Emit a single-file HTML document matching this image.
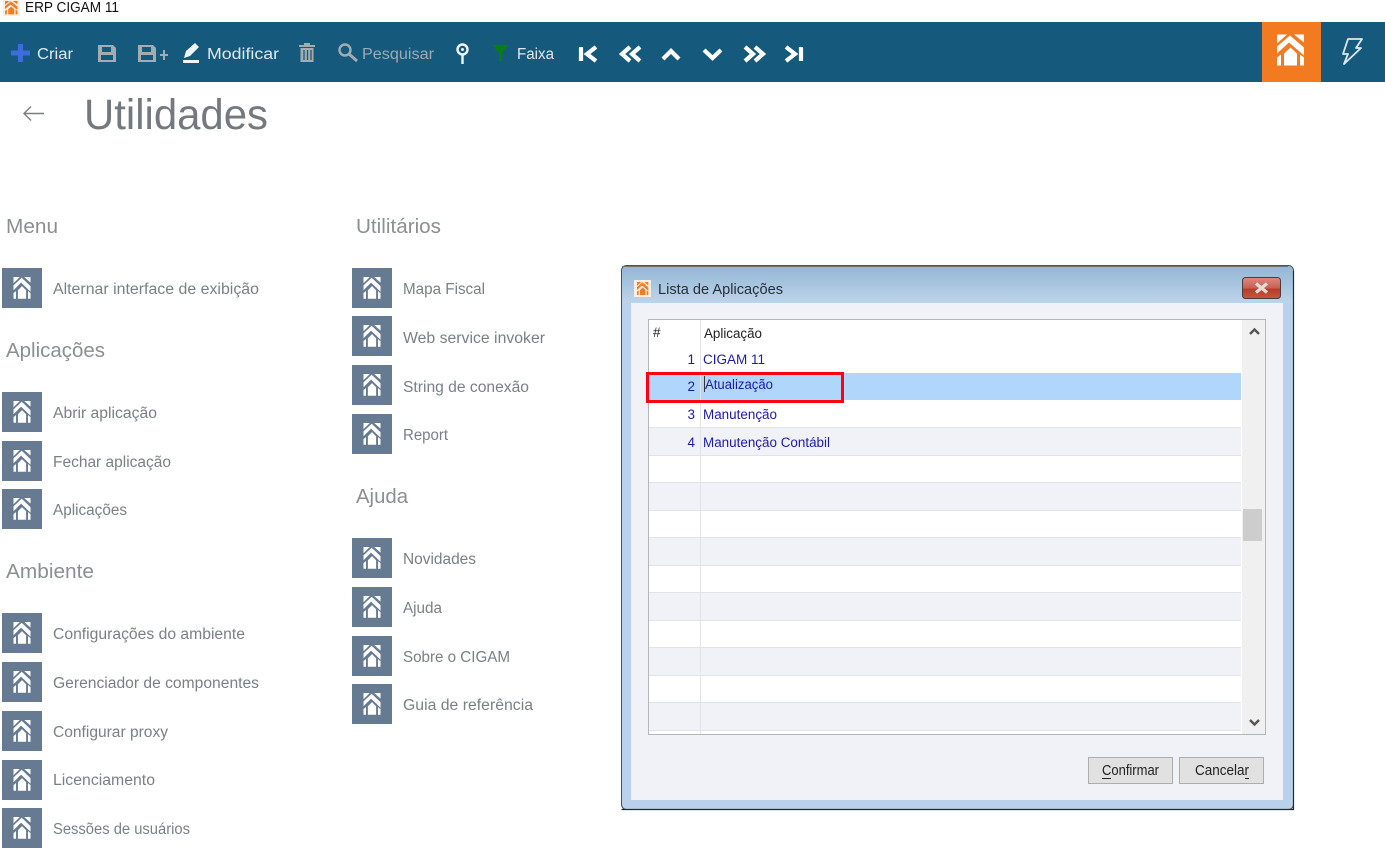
<!DOCTYPE html>
<html lang="pt-BR">
<head>
<meta charset="utf-8">
<title>ERP CIGAM 11</title>
<style>
html,body{margin:0;padding:0;background:#fff;width:1385px;height:868px;overflow:hidden}
svg{display:block}
text{font-family:"Liberation Sans",sans-serif}
.tb{font-size:15.500px;fill:#dfe8ed}
.dis{font-size:15.500px;fill:#9aabb5}
.hd{font-size:20.500px;fill:#8b8f93}
.it{font-size:15.500px;fill:#7a8086}
.blue{font-size:13.500px;fill:#1c1caa}
.blk{font-size:13.500px;fill:#222}
.num{font-size:13.500px;fill:#1c1caa;text-anchor:end}
</style>
</head>
<body>
<svg width="1385" height="868" viewBox="0 0 1385 868" xmlns="http://www.w3.org/2000/svg">
<defs>
<g id="logo">
<path d="M0 0H10L0 9Z M17 0H27V8Z M0 12L13 1L27 13V21L12 8L0 19Z M13.500 13L20 19V31H7V19Z M0 23L4 20V31H0Z M27 23L23 20V31H27Z"/>
</g>
<g id="tile">
<rect width="40" height="40" fill="#667a92"/>
<use href="#logo" transform="translate(11.500 9) scale(.63 .7)" fill="#fff"/>
</g>
<linearGradient id="title" x1="0" y1="0" x2="0" y2="1"><stop offset="0" stop-color="#93b6d5"/><stop offset="1" stop-color="#bdd4ea"/></linearGradient>
<linearGradient id="close" x1="0" y1="0" x2="0" y2="1"><stop offset="0" stop-color="#dd8a80"/><stop offset=".5" stop-color="#c9604f"/><stop offset=".55" stop-color="#b63c28"/><stop offset="1" stop-color="#c9563f"/></linearGradient>
</defs>

<!-- window title -->
<rect x="3" y="0" width="17" height="16" fill="#fbeee3"/>
<use href="#logo" transform="translate(5 1) scale(.46 .43)" fill="#f47b20"/>
<text x="25" y="12" font-size="14.500" fill="#111" textLength="94" lengthAdjust="spacingAndGlyphs">ERP CIGAM 11</text>

<!-- toolbar -->
<rect x="0" y="22" width="1385" height="60" fill="#155a7d"/>
<path d="M20.500 44V62M11 53H30" stroke="#3f6cdc" stroke-width="5" fill="none"/>
<text class="tb" x="37" y="59" textLength="36" lengthAdjust="spacingAndGlyphs">Criar</text>

<g fill="#a2acb2">
<path fill-rule="evenodd" d="M98 45H113L116 48V62H98Z M102 47V52H111V47Z M101 55V60H113V55Z"/>
<path fill-rule="evenodd" d="M138 45H153L156 48V62H138Z M142 47V52H151V47Z M141 55V60H153V55Z"/>
<path d="M160 54H163V50H165V54H168V56H165V60H163V56H160Z"/>
<path d="M304 43H310V45H315V47H299V45H304Z M300.500 48H313.500V62H300.500Z"/>
</g>
<path d="M304 50V60M307.500 50V60M311 50V60" stroke="#155a7d" stroke-width="1.300"/>

<path d="M183 60H199V63H183Z" fill="#f2f5f7"/>
<path d="M184 58L186 51L195 43L199 47L190 56Z" fill="#f2f5f7"/>
<text class="tb" x="207" y="59" textLength="72" lengthAdjust="spacingAndGlyphs">Modificar</text>

<circle cx="345" cy="50" r="5.500" fill="none" stroke="#a2acb2" stroke-width="2.400"/>
<path d="M349 54L357 61" stroke="#a2acb2" stroke-width="3"/>
<text class="dis" x="362" y="59" textLength="72" lengthAdjust="spacingAndGlyphs">Pesquisar</text>

<circle cx="462.500" cy="49.500" r="5" fill="none" stroke="#f2f5f7" stroke-width="2.400"/>
<circle cx="462.500" cy="49.500" r="1.500" fill="#f2f5f7"/>
<path d="M462.500 55V64" stroke="#f2f5f7" stroke-width="2.400"/>
<path d="M492 45H509L502 53V61H499V53Z" fill="#0a7d0a"/>
<text class="tb" x="517" y="59" textLength="37" lengthAdjust="spacingAndGlyphs">Faixa</text>

<g fill="none" stroke="#fff" stroke-width="4.200">
<path d="M581 47V61M596 47L587 54L596 61"/>
<path d="M630 47L622 54L630 61M640 47L632 54L640 61"/>
<path d="M663 59L671 51L679 59"/>
<path d="M704 50L712.500 58L721 50"/>
<path d="M745 47L753 54L745 61M755 47L763 54L755 61"/>
<path d="M786 47L795 54L786 61M801 47V61"/>
</g>

<rect x="1262" y="22" width="59" height="60" fill="#f27a21"/>
<use href="#logo" transform="translate(1277 34.500)" fill="#fff"/>
<path d="M1348 39H1362L1356 48H1361L1344 64L1348 54H1343Z" fill="none" stroke="#dfe8ed" stroke-width="1.800" stroke-linejoin="round"/>

<!-- page heading -->
<path d="M44 113.500H24M31 106.500L24 113.500L31 120.500" fill="none" stroke="#7a7f83" stroke-width="1.400"/>
<text x="84" y="129" font-size="43" fill="#73797f" textLength="184" lengthAdjust="spacingAndGlyphs">Utilidades</text>

<!-- column 1 -->
<text class="hd" x="6" y="233" textLength="52" lengthAdjust="spacingAndGlyphs">Menu</text>
<use href="#tile" x="2" y="268"/>
<text class="it" x="53" y="294" textLength="206" lengthAdjust="spacingAndGlyphs">Alternar interface de exibição</text>

<text class="hd" x="6" y="357" textLength="99" lengthAdjust="spacingAndGlyphs">Aplicações</text>
<use href="#tile" x="2" y="392"/>
<text class="it" x="53" y="418" textLength="104" lengthAdjust="spacingAndGlyphs">Abrir aplicação</text>
<use href="#tile" x="2" y="441"/>
<text class="it" x="53" y="467" textLength="118" lengthAdjust="spacingAndGlyphs">Fechar aplicação</text>
<use href="#tile" x="2" y="489"/>
<text class="it" x="53" y="515" textLength="74" lengthAdjust="spacingAndGlyphs">Aplicações</text>

<text class="hd" x="6" y="578" textLength="88" lengthAdjust="spacingAndGlyphs">Ambiente</text>
<use href="#tile" x="2" y="613"/>
<text class="it" x="53" y="639" textLength="192" lengthAdjust="spacingAndGlyphs">Configurações do ambiente</text>
<use href="#tile" x="2" y="662"/>
<text class="it" x="53" y="688" textLength="206" lengthAdjust="spacingAndGlyphs">Gerenciador de componentes</text>
<use href="#tile" x="2" y="711"/>
<text class="it" x="53" y="737" textLength="115" lengthAdjust="spacingAndGlyphs">Configurar proxy</text>
<use href="#tile" x="2" y="760"/>
<text class="it" x="53" y="785" textLength="102" lengthAdjust="spacingAndGlyphs">Licenciamento</text>
<use href="#tile" x="2" y="808"/>
<text class="it" x="53" y="834" textLength="137" lengthAdjust="spacingAndGlyphs">Sessões de usuários</text>

<!-- column 2 -->
<text class="hd" x="356" y="233" textLength="85" lengthAdjust="spacingAndGlyphs">Utilitários</text>
<use href="#tile" x="352" y="268"/>
<text class="it" x="403" y="294" textLength="82" lengthAdjust="spacingAndGlyphs">Mapa Fiscal</text>
<use href="#tile" x="352" y="316"/>
<text class="it" x="403" y="343" textLength="142" lengthAdjust="spacingAndGlyphs">Web service invoker</text>
<use href="#tile" x="352" y="365"/>
<text class="it" x="403" y="392" textLength="126" lengthAdjust="spacingAndGlyphs">String de conexão</text>
<use href="#tile" x="352" y="414"/>
<text class="it" x="403" y="440" textLength="45" lengthAdjust="spacingAndGlyphs">Report</text>

<text class="hd" x="356" y="503" textLength="52" lengthAdjust="spacingAndGlyphs">Ajuda</text>
<use href="#tile" x="352" y="538"/>
<text class="it" x="403" y="564" textLength="73" lengthAdjust="spacingAndGlyphs">Novidades</text>
<use href="#tile" x="352" y="587"/>
<text class="it" x="403" y="613" textLength="39" lengthAdjust="spacingAndGlyphs">Ajuda</text>
<use href="#tile" x="352" y="636"/>
<text class="it" x="403" y="662" textLength="107" lengthAdjust="spacingAndGlyphs">Sobre o CIGAM</text>
<use href="#tile" x="352" y="684"/>
<text class="it" x="403" y="710" textLength="130" lengthAdjust="spacingAndGlyphs">Guia de referência</text>

<!-- dialog -->
<rect x="621.500" y="265.500" width="672" height="544" rx="5" fill="#b9d1ea" stroke="#4a4f54"/>
<path d="M622 303V271a5 5 0 0 1 5-5H1288a5 5 0 0 1 5 5V303Z" fill="url(#title)"/>
<path d="M622 266.500H1288" stroke="#6f7579"/>
<path d="M1293.500 271V809.500H621.500" fill="none" stroke="#1d2a30" stroke-width="1.200"/>
<rect x="631" y="303" width="652" height="497" fill="#f0f2f8"/>
<rect x="634" y="280" width="17" height="17" fill="#fbeee3"/>
<use href="#logo" transform="translate(637 282) scale(.42 .42)" fill="#f47b20"/>
<text x="658" y="294" font-size="14.500" fill="#2a2f36" textLength="125" lengthAdjust="spacingAndGlyphs">Lista de Aplicações</text>
<rect x="1242.500" y="277.500" width="38" height="21" rx="3" fill="url(#close)" stroke="#4d3a40"/>
<path d="M1256 283.500L1267 292.500M1267 283.500L1256 292.500" stroke="#e4dcdb" stroke-width="3.200"/>

<!-- table -->
<rect x="648.500" y="319.500" width="617" height="415" fill="#fff" stroke="#b4b7ba"/>
<g fill="#f0f2f8">
<rect x="649" y="428" width="592" height="27"/>
<rect x="649" y="483" width="592" height="27"/>
<rect x="649" y="538" width="592" height="27"/>
<rect x="649" y="593" width="592" height="27"/>
<rect x="649" y="648" width="592" height="27"/>
<rect x="649" y="703" width="592" height="27"/>
</g>
<rect x="649" y="373" width="592" height="27" fill="#b1d6fb"/>
<g stroke="#e2e3e6" stroke-width="1" fill="none">
<path d="M649 427.500H1241M649 455.500H1241M649 482.500H1241M649 510.500H1241M649 537.500H1241M649 565.500H1241M649 592.500H1241M649 620.500H1241M649 647.500H1241M649 675.500H1241M649 702.500H1241M649 730.500H1241"/>
<path d="M700.500 320V734"/>
</g>
<rect x="1242" y="320" width="23" height="414" fill="#f0f0f0"/>
<rect x="1243" y="509" width="19" height="32" fill="#cdcdcd"/>
<path d="M1250 334L1254.500 329.500L1259 334M1250 720L1254.500 724.500L1259 720" fill="none" stroke="#555" stroke-width="2.400"/>

<text class="blk" x="653" y="337" font-size="14">#</text>
<text class="blk" x="704" y="338" textLength="58" lengthAdjust="spacingAndGlyphs">Aplicação</text>
<text class="num" x="695" y="364">1</text>
<text class="blue" x="703" y="364" textLength="62" lengthAdjust="spacingAndGlyphs">CIGAM 11</text>
<text class="num" x="695" y="391">2</text>
<text class="blue" x="705" y="389" textLength="68" lengthAdjust="spacingAndGlyphs">Atualização</text>
<path d="M704.500 376V392" stroke="#333" stroke-width="1"/>
<text class="num" x="695" y="419">3</text>
<text class="blue" x="703" y="419" textLength="74" lengthAdjust="spacingAndGlyphs">Manutenção</text>
<text class="num" x="695" y="447">4</text>
<text class="blue" x="703" y="447" textLength="127" lengthAdjust="spacingAndGlyphs">Manutenção Contábil</text>

<rect x="647.500" y="373.500" width="195" height="28" fill="none" stroke="#fa0410" stroke-width="3"/>

<!-- buttons -->
<rect x="1088.500" y="757.500" width="84" height="26" fill="#e1e1e1" stroke="#adadad"/>
<text x="1102" y="775" font-size="14.500" fill="#222" textLength="57" lengthAdjust="spacingAndGlyphs">Confirmar</text>
<path d="M1102 778.500H1111" stroke="#222"/>
<rect x="1179.500" y="757.500" width="84" height="26" fill="#e1e1e1" stroke="#adadad"/>
<text x="1195" y="775" font-size="14.500" fill="#222" textLength="54" lengthAdjust="spacingAndGlyphs">Cancelar</text>
<path d="M1245 778.500H1249" stroke="#222"/>
</svg>
</body>
</html>
